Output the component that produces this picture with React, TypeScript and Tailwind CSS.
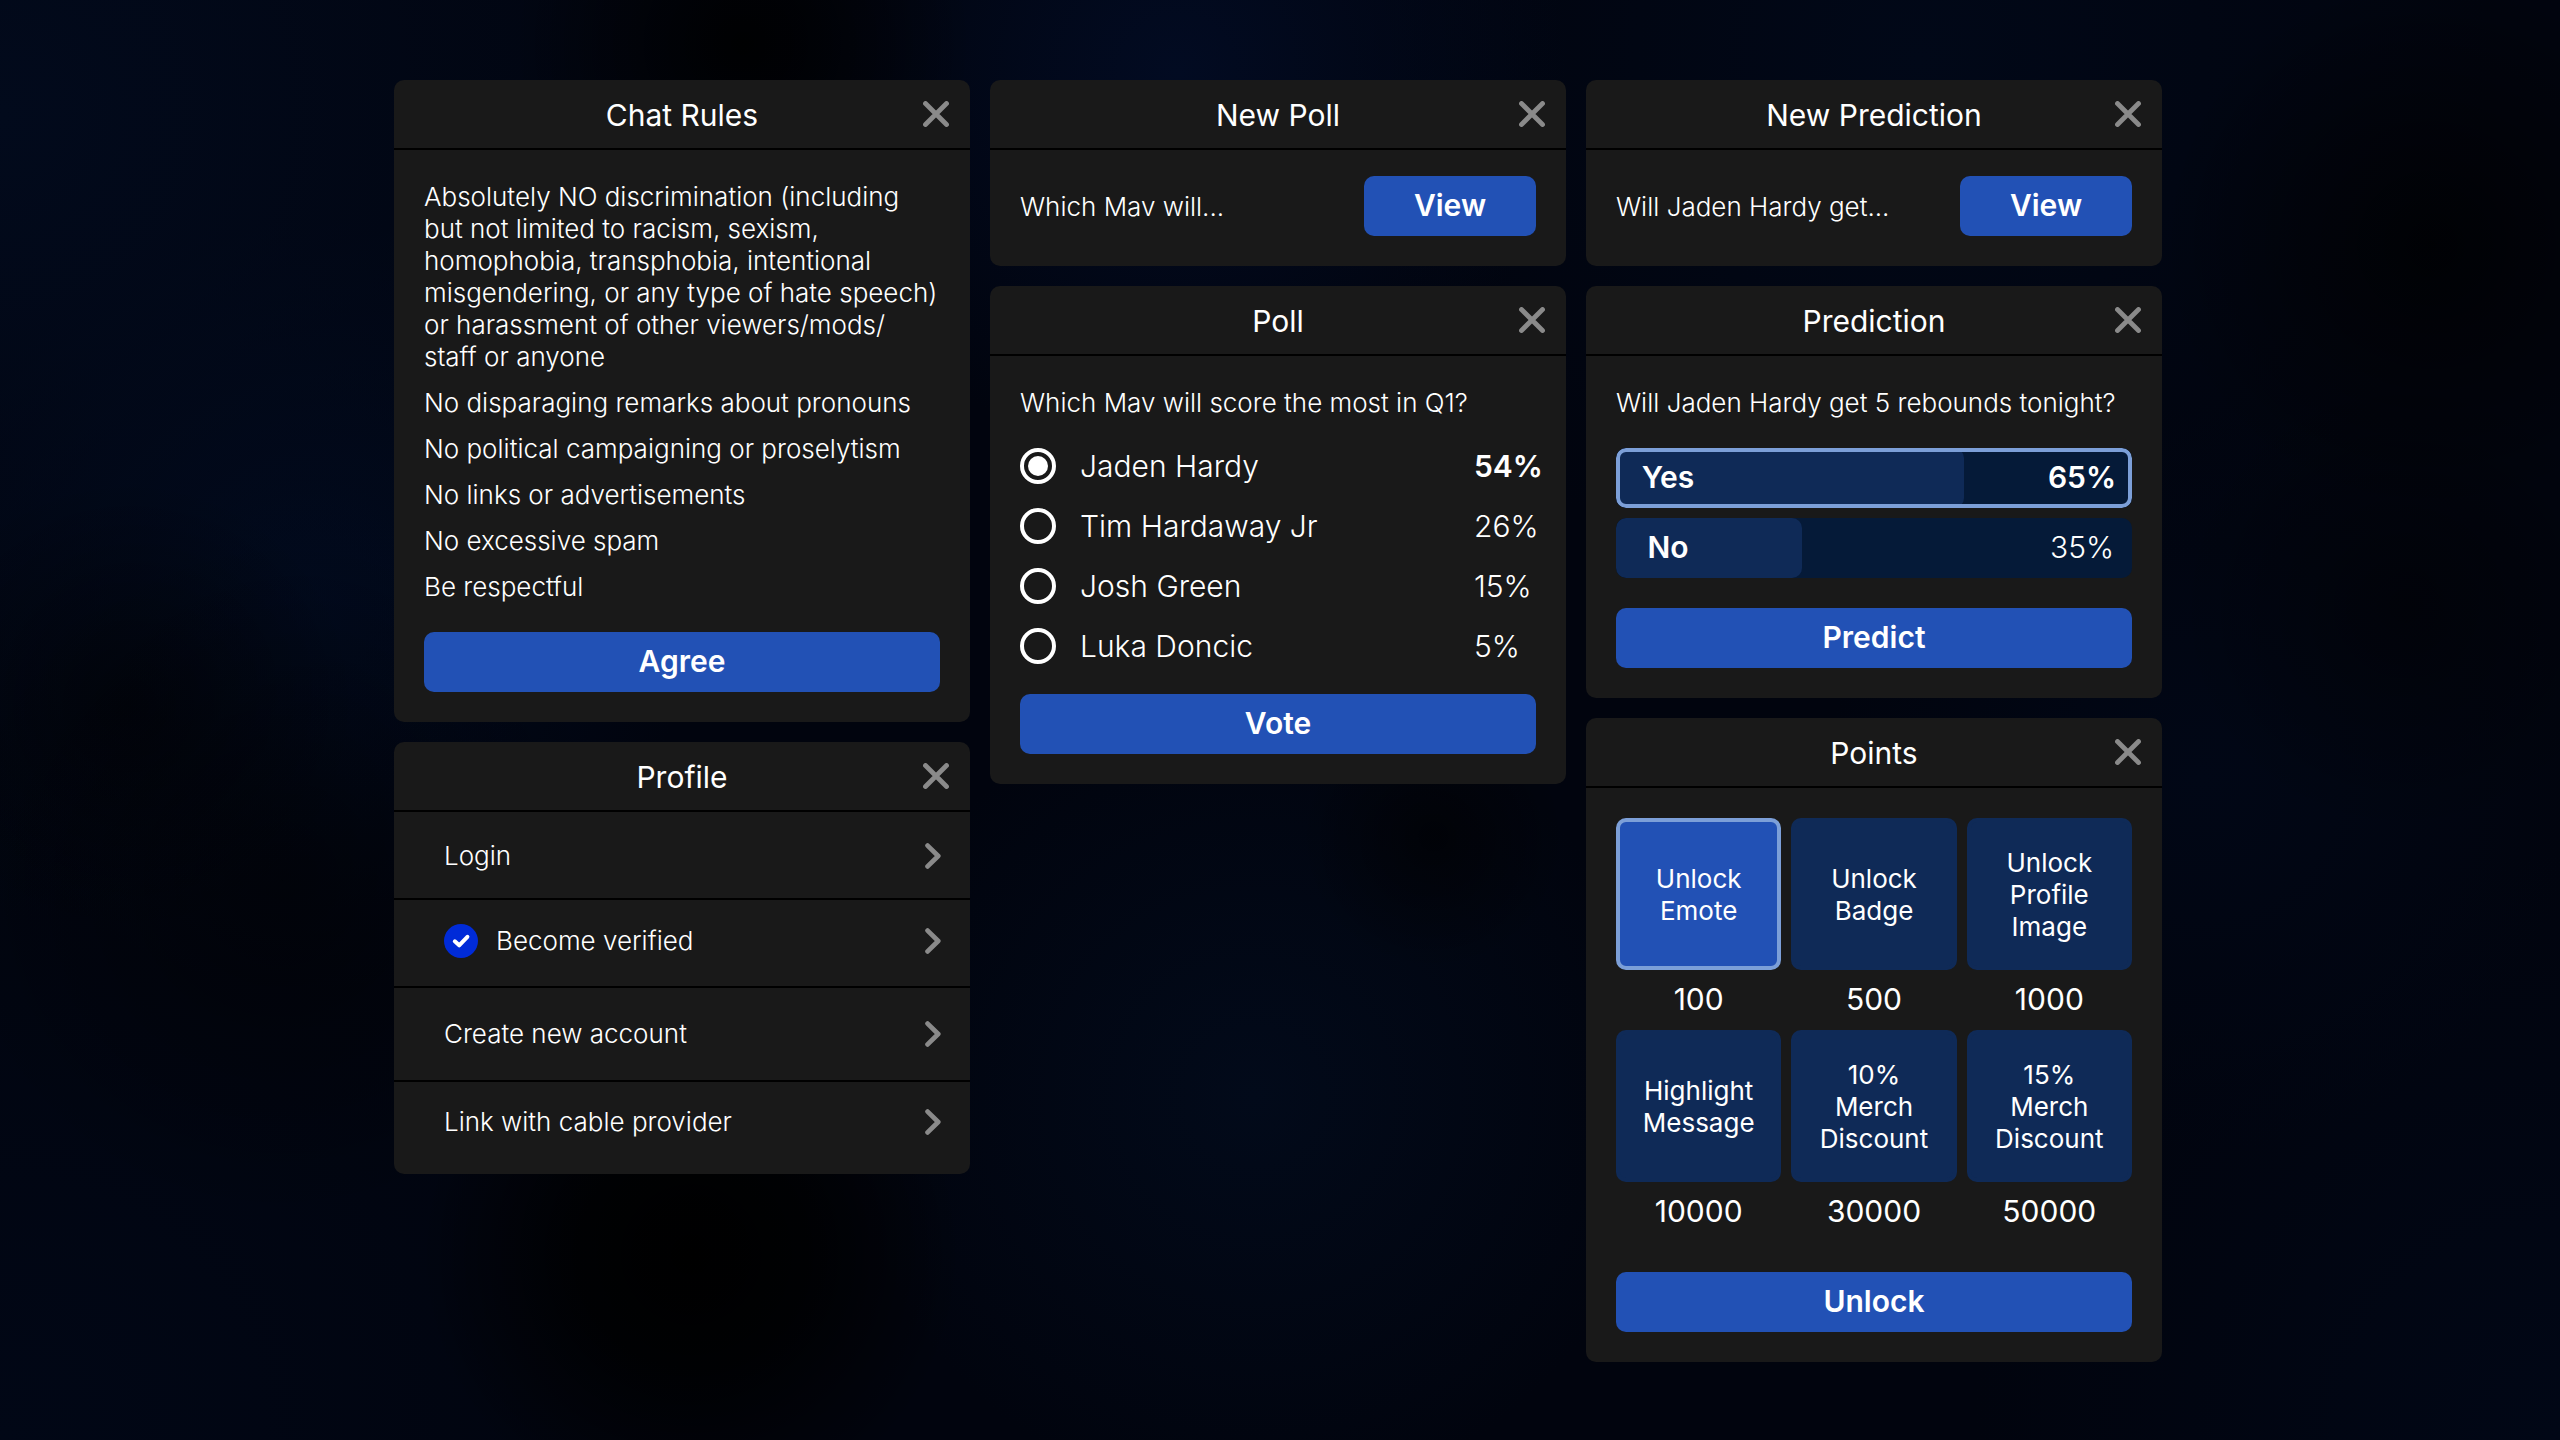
import { useState } from "react";
import type { ReactNode } from "react";

function Card({ title, children }: { title: string; children: ReactNode }) {
  return (
    <section className="overflow-hidden rounded-[10px] bg-[#191919]">
      <header className="relative border-b-2 border-black px-14 pt-[17px] pb-[15px]">
        <h2 className="text-center text-[30px] leading-9">{title}</h2>
        <button
          type="button"
          aria-label={`Close ${title}`}
          className="absolute inset-y-0 right-[21px] flex cursor-pointer items-center"
        >
          <svg viewBox="0 0 26 26" className="size-[26px]" fill="none" stroke="#8a8a8a" strokeWidth="4.8" strokeLinecap="round">
            <path d="M2.5 2.5 23.5 23.5M23.5 2.5 2.5 23.5" />
          </svg>
        </button>
      </header>
      {children}
    </section>
  );
}

function ActionButton({ children }: { children: ReactNode }) {
  return (
    <button
      type="button"
      className="h-[60px] w-full cursor-pointer rounded-[10px] bg-[#2251b5] pb-0.5 text-[30px] leading-9 font-semibold"
    >
      {children}
    </button>
  );
}

function Teaser({ title, text }: { title: string; text: string }) {
  return (
    <Card title={title}>
      <div className="flex items-center justify-between px-[30px] pt-[26px] pb-[30px]">
        <p className="pt-0.5 font-light">{text}</p>
        <div className="w-[172px]">
          <ActionButton>View</ActionButton>
        </div>
      </div>
    </Card>
  );
}

const rules = [
  <>
    Absolutely NO discrimination (including but not limited to racism, sexism, homophobia, transphobia,
    intentional misgendering, or any type of hate speech) or harassment of other viewers/mods/
    <br />
    staff or anyone
  </>,
  "No disparaging remarks about pronouns",
  "No political campaigning or proselytism",
  "No links or advertisements",
  "No excessive spam",
  "Be respectful",
];

function ChatRules() {
  return (
    <Card title="Chat Rules">
      <div className="px-[30px] pt-[31px] pb-[30px]">
        <ul className="mb-[29px] flex flex-col gap-[14px] font-light">
          {rules.map((rule, i) => (
            <li key={i}>{rule}</li>
          ))}
        </ul>
        <ActionButton>Agree</ActionButton>
      </div>
    </Card>
  );
}

const profileLinks = [
  { label: "Login", verified: false, padding: "pt-7 pb-[26px]" },
  { label: "Become verified", verified: true, padding: "pt-6 pb-7" },
  { label: "Create new account", verified: false, padding: "py-[30px]" },
  { label: "Link with cable provider", verified: false, padding: "pt-6 pb-9" },
];

function Profile() {
  return (
    <Card title="Profile">
      <nav className="divide-y-2 divide-black">
        {profileLinks.map(({ label, verified, padding }) => (
          <a key={label} href="#" className={`flex items-center gap-[18px] pr-[29px] pl-[50px] font-light ${padding}`}>
            {verified && (
              <svg viewBox="0 0 34 34" className="size-[34px]" aria-hidden="true">
                <circle cx="17" cy="17" r="17" fill="#002bd8" />
                <path d="M10.8 17.3 15.2 21.3 23.4 12.8" fill="none" stroke="#fff" strokeWidth="4" strokeLinecap="round" strokeLinejoin="round" />
              </svg>
            )}
            <span className="grow">{label}</span>
            <svg viewBox="0 0 16 26" className="h-[26px] w-4" fill="none" stroke="#8a8a8a" strokeWidth="4.8" strokeLinecap="round" strokeLinejoin="round" aria-hidden="true">
              <path d="M2.6 2.6 13.2 13 2.6 23.4" />
            </svg>
          </a>
        ))}
      </nav>
    </Card>
  );
}

const players = [
  { name: "Jaden Hardy", share: "54%" },
  { name: "Tim Hardaway Jr", share: "26%" },
  { name: "Josh Green", share: "15%" },
  { name: "Luka Doncic", share: "5%" },
];

function Poll() {
  const [choice, setChoice] = useState("Jaden Hardy");
  return (
    <Card title="Poll">
      <fieldset aria-labelledby="poll-question" className="px-[30px] pt-[31px] pb-[30px]">
        <p id="poll-question" className="font-light">Which Mav will score the most in Q1?</p>
        <div className="mt-[29px] mb-[30px] flex flex-col gap-6 text-[30px] leading-9">
          {players.map(({ name, share }) => (
            <label key={name} className="flex cursor-pointer items-center gap-6">
              <input
                type="radio"
                name="poll"
                checked={choice === name}
                onChange={() => setChoice(name)}
                className="size-9 shrink-0 cursor-pointer appearance-none rounded-full border-4 border-white p-1 checked:bg-white checked:bg-clip-content"
              />
              <span className="grow font-light">{name}</span>
              <span className={choice === name ? "w-[62px] font-semibold" : "w-[62px] font-light"}>{share}</span>
            </label>
          ))}
        </div>
        <ActionButton>Vote</ActionButton>
      </fieldset>
    </Card>
  );
}

const outcomes = [
  { name: "Yes", share: "65%", fill: 67.5 },
  { name: "No", share: "35%", fill: 36 },
];

function Prediction() {
  const [choice, setChoice] = useState("Yes");
  return (
    <Card title="Prediction">
      <div className="px-[30px] pt-[31px] pb-[30px]">
        <p className="font-light">Will Jaden Hardy get 5 rebounds tonight?</p>
        <div className="mt-[29px] mb-[30px] flex flex-col gap-[10px]">
          {outcomes.map(({ name, share, fill }) => {
            const selected = choice === name;
            return (
              <button
                key={name}
                type="button"
                aria-pressed={selected}
                onClick={() => setChoice(name)}
                className="relative flex h-[60px] cursor-pointer items-center justify-between overflow-hidden rounded-[10px] bg-[#051a38] pb-0.5 text-[30px] leading-9"
              >
                <span className="absolute inset-y-0 left-0 rounded-[10px] bg-[#0f2a57]" style={{ width: `${fill}%` }} />
                <span className="relative w-[104px] text-center font-semibold">{name}</span>
                <span className={selected ? "relative w-[100px] text-center font-semibold" : "relative w-[100px] text-center font-light"}>
                  {share}
                </span>
                {selected && <span className="absolute inset-0 rounded-[10px] border-4 border-[#7c9fd8]" />}
              </button>
            );
          })}
        </div>
        <ActionButton>Predict</ActionButton>
      </div>
    </Card>
  );
}

const rewards = [
  { name: "Unlock Emote", cost: 100 },
  { name: "Unlock Badge", cost: 500 },
  { name: "Unlock Profile Image", cost: 1000 },
  { name: "Highlight Message", cost: 10000 },
  { name: "10% Merch Discount", cost: 30000 },
  { name: "15% Merch Discount", cost: 50000 },
];

function Points() {
  const [choice, setChoice] = useState("Unlock Emote");
  return (
    <Card title="Points">
      <div className="p-[30px]">
        <ul className="mb-[30px] grid grid-cols-3 gap-x-[10px]">
          {rewards.map(({ name, cost }) => (
            <li key={name}>
              <button
                type="button"
                aria-pressed={choice === name}
                onClick={() => setChoice(name)}
                className={`flex h-[152px] w-full cursor-pointer items-center justify-center rounded-[10px] border-4 px-5 pt-0.5 ${
                  choice === name ? "border-[#7c9fd8] bg-[#2251b5]" : "border-[#0f2a57] bg-[#0f2a57]"
                }`}
              >
                {name}
              </button>
              <p className="pt-[11px] pb-[13px] text-center text-[30px] leading-9">{cost}</p>
            </li>
          ))}
        </ul>
        <ActionButton>Unlock</ActionButton>
      </div>
    </Card>
  );
}

export default function App() {
  return (
    <main className="min-h-screen bg-[#01040e] bg-[radial-gradient(circle_at_27%_87%,#000_0,#000000cc_5%,transparent_12%),radial-gradient(circle_at_11%_61%,#00000080_0,transparent_14%),radial-gradient(circle_at_5%_49%,#00000080_0,transparent_9%),radial-gradient(circle_at_95%_17%,#000000b0_0,transparent_10%),radial-gradient(circle_at_94%_42%,#00000070_0,transparent_9%),radial-gradient(circle_at_29%_3%,#000000e0_0,transparent_10%),radial-gradient(circle_at_56%_58%,#00000090_0,transparent_8%),radial-gradient(circle_at_0%_8%,#020a1c_0,transparent_28%),radial-gradient(circle_at_12%_42%,#010a1e_0,transparent_16%),radial-gradient(circle_at_46%_5%,#020b22_0,transparent_20%),radial-gradient(circle_at_49%_76%,#020a1a_0,transparent_24%),radial-gradient(circle_at_75%_4%,#010818_0,transparent_24%),radial-gradient(circle_at_86%_54%,#010716_0,transparent_16%),radial-gradient(circle_at_0%_100%,#010716_0,transparent_24%),radial-gradient(circle_at_100%_100%,#010716_0,transparent_20%)] py-20 pr-1 font-['Inter',sans-serif] text-[26px] leading-8 text-white">
      <div className="mx-auto grid max-w-[1768px] grid-cols-3 items-start gap-5">
        <div className="flex flex-col gap-5">
          <ChatRules />
          <Profile />
        </div>
        <div className="flex flex-col gap-5">
          <Teaser title="New Poll" text="Which Mav will..." />
          <Poll />
        </div>
        <div className="flex flex-col gap-5">
          <Teaser title="New Prediction" text="Will Jaden Hardy get..." />
          <Prediction />
          <Points />
        </div>
      </div>
    </main>
  );
}
